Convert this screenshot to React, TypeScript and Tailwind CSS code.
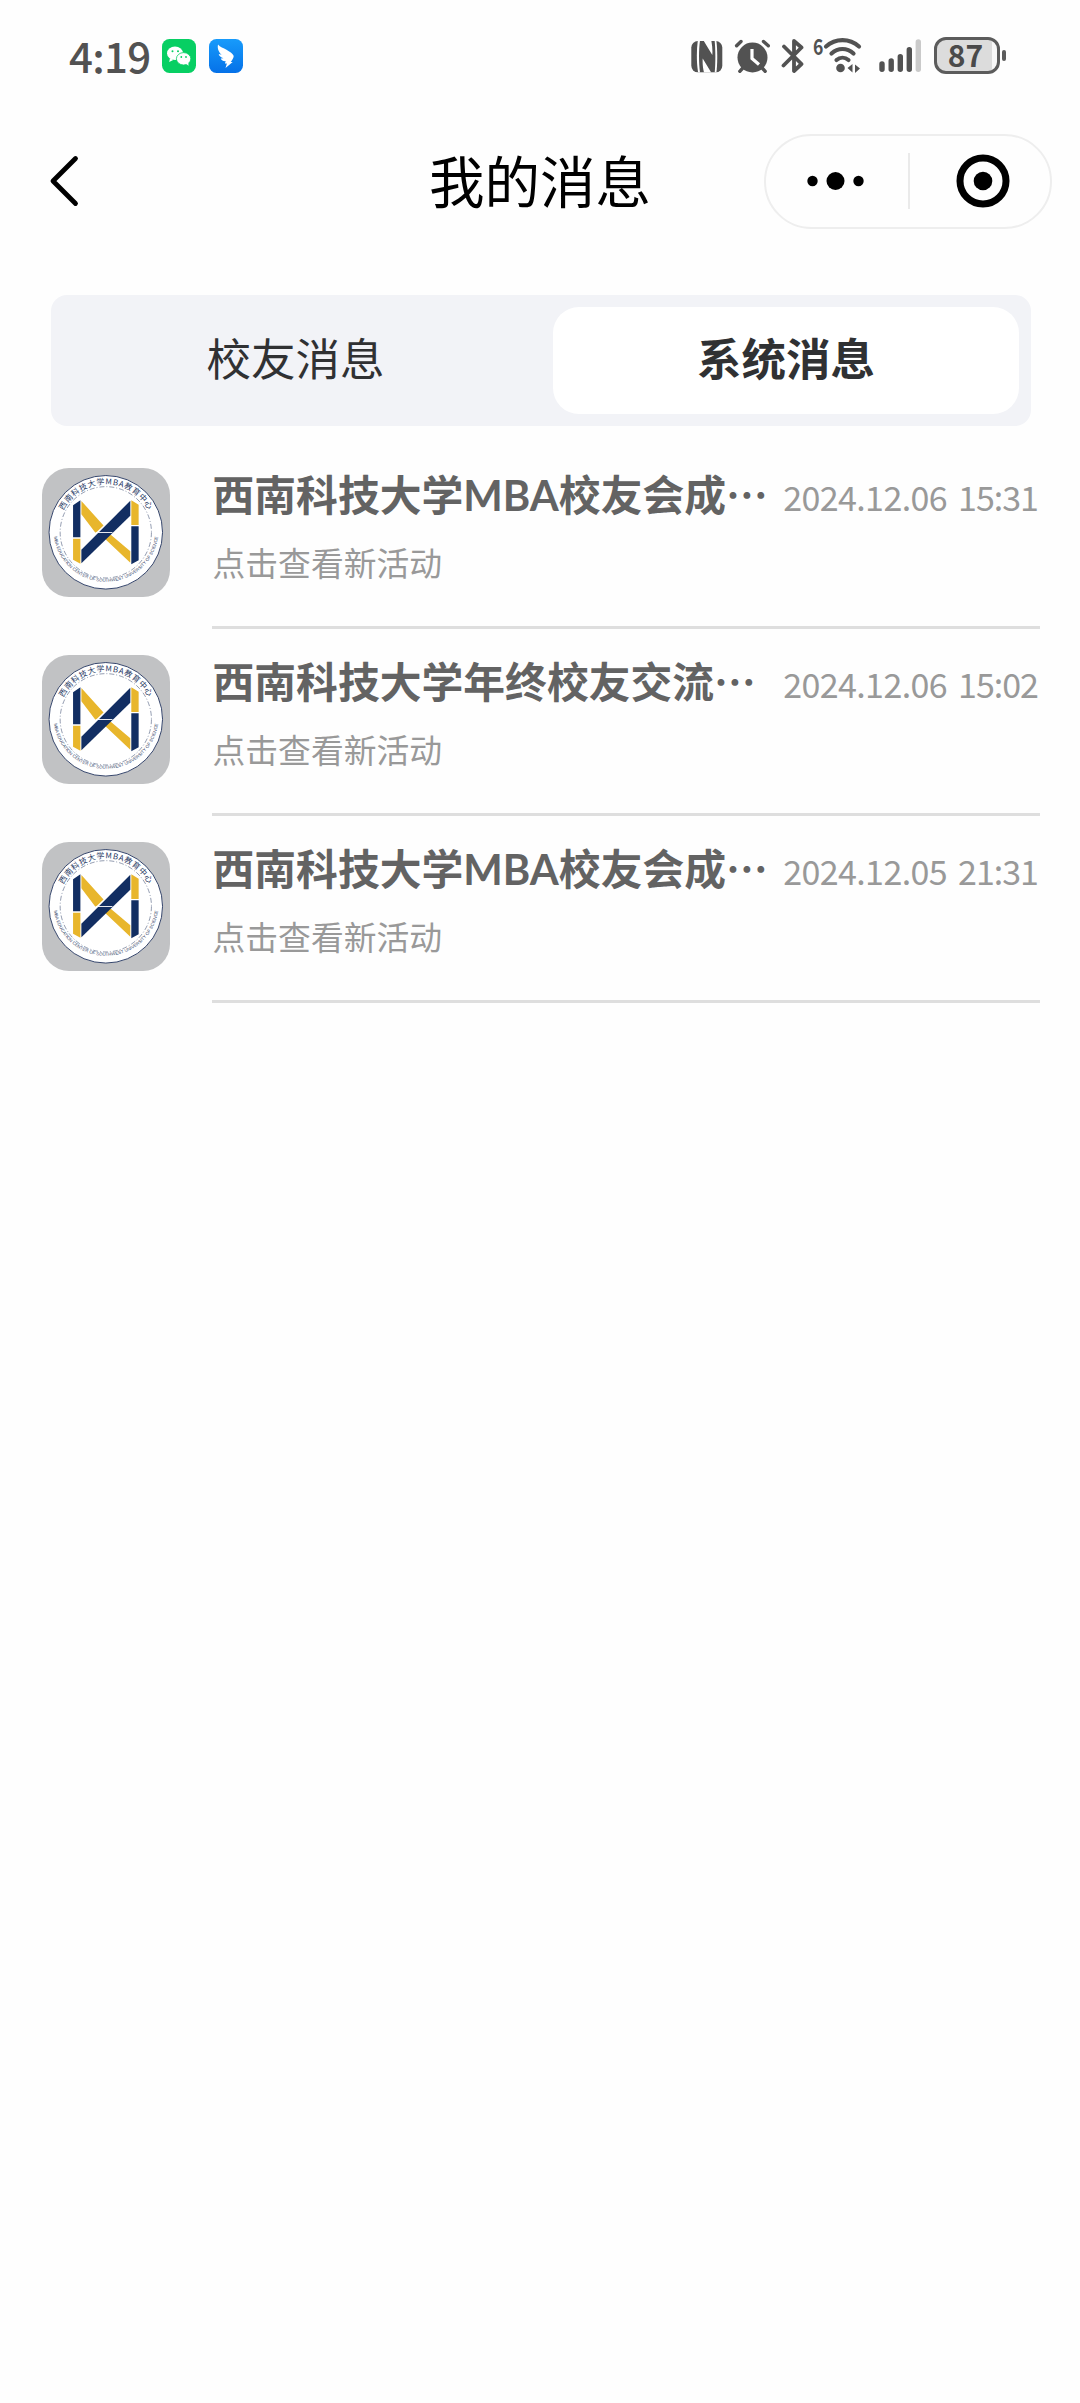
type Message = { id: number; title: string; hint: string; time: string }

const messages: Message[] = [
  { id: 1, title: '西南科技大学MBA校友会成', hint: '点击查看新活动', time: '2024.12.06 15:31' },
  { id: 2, title: '西南科技大学年终校友交流', hint: '点击查看新活动', time: '2024.12.06 15:02' },
  { id: 3, title: '西南科技大学MBA校友会成', hint: '点击查看新活动', time: '2024.12.05 21:31' },
]

function StatusBar() {
  return (
    <div className="flex h-[112px] items-start pt-[36px] text-[#525252]">
      <span className="ml-[69px] mt-[-2px] w-[93px] whitespace-nowrap font-['Noto_Sans_CJK_SC',sans-serif] text-[42px] font-medium leading-[41px] tracking-[-0.7px]">
        4:19
      </span>
      <svg className="mt-[3px] h-[34px] w-[34px]" viewBox="0 0 34 34">
        <rect width="34" height="34" rx="7.5" fill="#07cf63" />
        <ellipse cx="13" cy="14.3" rx="8" ry="6.8" fill="#fff" />
        <path d="M8 19l-.8 4 4-2z" fill="#fff" />
        <ellipse cx="21.6" cy="19.8" rx="7.2" ry="6.2" fill="#fff" stroke="#07cf63" strokeWidth="0.8" />
        <path d="M24 24.8l2.6 2-.4-3.4z" fill="#fff" />
        <g fill="#07cf63">
          <circle cx="10.5" cy="12.2" r="1" />
          <circle cx="16" cy="12.2" r="1" />
          <circle cx="19.3" cy="18" r="0.9" />
          <circle cx="24" cy="18" r="0.9" />
        </g>
      </svg>
      <svg className="ml-[13px] mt-[3px] h-[34px] w-[34px]" viewBox="0 0 34 34">
        <defs>
          <linearGradient id="wing" x1="0" y1="0" x2="0" y2="1">
            <stop offset="0" stopColor="#179bfb" />
            <stop offset="1" stopColor="#0571e8" />
          </linearGradient>
        </defs>
        <rect width="34" height="34" rx="7.5" fill="url(#wing)" />
        <path
          d="M9 5.5c2 2.6 5.5 3.5 8.5 5.3 3.2 1.9 6 3.7 7 5.7.5 1.3-.2 2.5-1.5 4.7l-1.3 1.9h2L16.5 29l1.4-4.6h-2l.8-2.3c-2.3.2-4-.7-5-2.6l2.8-.2c-2.6-.8-4.4-2.2-4.8-4.2l3 .6C10.2 13.8 8 10 9 5.5z"
          fill="#fff"
        />
      </svg>

      <svg className="ml-[447px] h-[40px] w-[34px]" viewBox="0 0 34 40">
        <defs>
          <clipPath id="nfc">
            <rect x="1.3" y="5" width="31" height="31.3" rx="6.5" />
          </clipPath>
        </defs>
        <g clipPath="url(#nfc)">
          <path d="M0 0h34v40H0z" fill="#525252" />
          <path d="M8 3C6.4 14 6.4 28 8.4 38h17.800c1.400-10 1.400-24 0-35z" fill="#fff" />
          <path
            d="M10 4.500h3.500L22.300 19c.4-5-.1-9.500-1-14.500h3.300c1 8 1 23 .1 32h-3.500L12.700 22.500c-.3 5 .2 9.500 1.300 14H10C8.700 27 8.700 14 10 4.500z"
            fill="#525252"
          />
        </g>
      </svg>
      <svg className="ml-[10px] h-[40px] w-[37px]" viewBox="0 0 37 40">
        <g fill="none" stroke="#525252" strokeWidth="3.4" strokeLinecap="round">
          <path d="M2.6 9.8L7 5.5M29.5 5.5L34.3 9.8M5.8 35.3l3-3.3M31.2 35.3l-3-3.3" />
        </g>
        <circle cx="18.5" cy="21.5" r="15" fill="#525252" />
        <path d="M18 13v9.5l7 6" fill="none" stroke="#fff" strokeWidth="3.2" />
      </svg>
      <svg className="ml-[10px] h-[40px] w-[24px]" viewBox="0 0 24 40">
        <path
          d="M3 10.5L20.5 28l-7.5 7V5l7.5 6.5L2.5 29.5"
          fill="none"
          stroke="#525252"
          strokeWidth="3.8"
          strokeLinecap="round"
          strokeLinejoin="round"
        />
      </svg>
      <span className="ml-[8px] mt-[-2px] w-[10px] origin-left scale-x-[0.8] font-['Noto_Sans_CJK_SC',sans-serif] text-[22px] font-bold leading-[22px]">
        6
      </span>
      <svg className="h-[40px] w-[40px]" viewBox="0 0 40 40">
        <g fill="none" stroke="#525252" strokeWidth="4.2" strokeLinecap="round">
          <path d="M3 10.5C12.5 2 26.5 2 36 10.5" />
          <path d="M8.5 17.5c6.5-6 15.5-6 22 0" />
          <path d="M13.5 24c3.5-3 8.5-3 12 0" />
        </g>
        <circle cx="17.5" cy="32" r="4.3" fill="#525252" />
        <path d="M29.5 28v8.5L24.5 32zM32 28.5v8.5l5-4.5z" fill="#525252" />
      </svg>
      <svg className="ml-[14px] h-[40px] w-[46px]" viewBox="0 0 46 40">
        <g stroke="#525252" strokeWidth="5.4" strokeLinecap="round">
          <path d="M5 28v5.2M14.2 25v8.2M23.3 20.8v12.4M32.3 13.8v19.4" />
          <path d="M41.3 6v27.2" stroke="#cacaca" />
        </g>
      </svg>
      <div className="ml-[11px] mt-[1px] flex h-[37px] w-[66px] items-center justify-center rounded-[12px] border-[3px] border-[#5c5c5c] bg-[linear-gradient(90deg,#dcdcdc_91%,#f8f8f8_91%)]">
        <span className="mr-[3px] mt-[-4px] font-['Noto_Sans_CJK_SC',sans-serif] text-[30px] font-bold leading-[30px] text-[#4a4a4a]">
          87
        </span>
      </div>
      <div className="ml-[2px] mt-[14px] h-[11px] w-[4px] rounded-[2px] bg-[#5c5c5c]" />
    </div>
  )
}

function NavBar() {
  return (
    <div className="flex h-[138px] items-center">
      <svg className="ml-[49px] h-[52px] w-[31px]" viewBox="0 0 31 52">
        <path d="M26.5 3.5L4 26l22.5 22.5" fill="none" stroke="#000" strokeWidth="4.8" strokeLinecap="round" strokeLinejoin="round" />
      </svg>
      <h1 className="ml-[349px] mt-[-4px] w-[335px] text-[55.5px] leading-[80px] text-black">我的消息</h1>
      <div className="flex h-[95px] w-[288px] items-center rounded-full border-2 border-[#eee]">
        <svg className="h-[20px] w-[142px]" viewBox="0 0 142 20">
          <circle cx="46.5" cy="10" r="5.2" />
          <circle cx="69.5" cy="10" r="9" />
          <circle cx="92.5" cy="10" r="5.2" />
        </svg>
        <div className="h-[56px] w-[2px] bg-[#eaeaea]" />
        <svg className="ml-[45px] h-[56px] w-[56px]" viewBox="0 0 56 56">
          <circle cx="28" cy="28" r="23" fill="none" stroke="#000" strokeWidth="7" />
          <circle cx="28" cy="28" r="9.3" />
        </svg>
      </div>
    </div>
  )
}

function Tabs() {
  return (
    <div className="ml-[51px] mt-[45px] flex h-[131px] w-[980px] rounded-[16px] bg-[#f2f3f7] py-3 pr-3 text-[44.5px] text-[#303133]">
      <button type="button" className="w-[502px] pb-[6px] pr-[13px]">
        校友消息
      </button>
      <button type="button" className="flex-1 rounded-[26px] bg-white pb-[6px] font-bold">
        系统消息
      </button>
    </div>
  )
}

function Seal() {
  return (
    <svg className="h-[129px] w-[128px] shrink-0 rounded-[27px] bg-[#c1c2c4]" viewBox="0 0 129 129">
      <defs>
        <path id="seal-top" d="M16.5 64a48 48 0 0 1 96 0" />
        <path id="seal-bottom" d="M11.6 58a53 53 0 1 0 105.8 0" />
      </defs>
      <circle cx="64.3" cy="64.3" r="57.2" fill="#fff" stroke="#34456b" strokeWidth="1" />
      <circle cx="64.3" cy="64.3" r="46" fill="none" stroke="#4b5a7b" strokeWidth="0.6" strokeDasharray="5 2 1 2" />
      <text className="font-['Noto_Sans_CJK_SC',sans-serif]" fontSize="8" fill="#26375f" letterSpacing="0.7">
        <textPath href="#seal-top" startOffset="50%" textAnchor="middle">
          西南科技大学MBA教育中心
        </textPath>
      </text>
      <text className="font-['Liberation_Sans',sans-serif]" fontSize="4.5" fill="#3c4b6e">
        <textPath href="#seal-bottom" startOffset="50%" textAnchor="middle">
          MBA EDUCATION CENTER OF SOUTHWEST UNIVERSITY OF SCIENCE
        </textPath>
      </text>
      <path fill="#e8b62c" d="M39.7 32.7L62 57.5 54 65 39.7 46zM69 66.5L89 83.5V95L61.5 69z" />
      <path fill="#e8b62c" d="M31.3 70.7H38.7V96L31.3 92zM90 32l7.4 4.5V57H90z" />
      <path fill="#122e62" d="M89 32.5V47.5L39.7 95.5V82z" />
      <path fill="#122e62" d="M31.3 37L38.7 32V69.3H31.3zM90 58.2h7.4V92.5L90 96.5z" />
      <path d="M54 64.5h17" stroke="#fff" strokeWidth="0.9" />
    </svg>
  )
}

function MessageRow({ message }: { message: Message }) {
  const [day, clock] = message.time.split(' ')

  return (
    <li className="flex h-[187px] pl-[42px]">
      <Seal />
      <div className="ml-[42px] flex h-[161px] w-[828px] flex-col border-b-[3px] border-[#dedede]">
        <div className="mt-[-2px] flex items-center justify-between whitespace-nowrap">
          <p className="ml-[0.5px] text-[41.8px] font-bold leading-[54px] text-[#636363] font-['Lato','Noto_Sans_CJK_SC',sans-serif]">
            {message.title}
            <span className="font-['Noto_Sans_CJK_SC',sans-serif]">…</span>
          </p>
          <time className="mr-[2px] mt-[6px] flex gap-[11px] text-[34px] leading-[48px] tracking-[-0.6px] text-[#999]">
            <span>{day}</span>
            <span className="tracking-[-1px]">{clock}</span>
          </time>
        </div>
        <p className="ml-[0.5px] mt-[18px] text-[32.8px] leading-[44px] text-[#999]">{message.hint}</p>
      </div>
    </li>
  )
}

export default function App() {
  return (
    <div className="h-[2403px] w-[1080px] overflow-hidden bg-[#fefefe] font-['Noto_Sans_CJK_SC',sans-serif]">
      <StatusBar />
      <NavBar />
      <Tabs />
      <ul className="mt-[42px]">
        {messages.map((m) => (
          <MessageRow key={m.id} message={m} />
        ))}
      </ul>
    </div>
  )
}
